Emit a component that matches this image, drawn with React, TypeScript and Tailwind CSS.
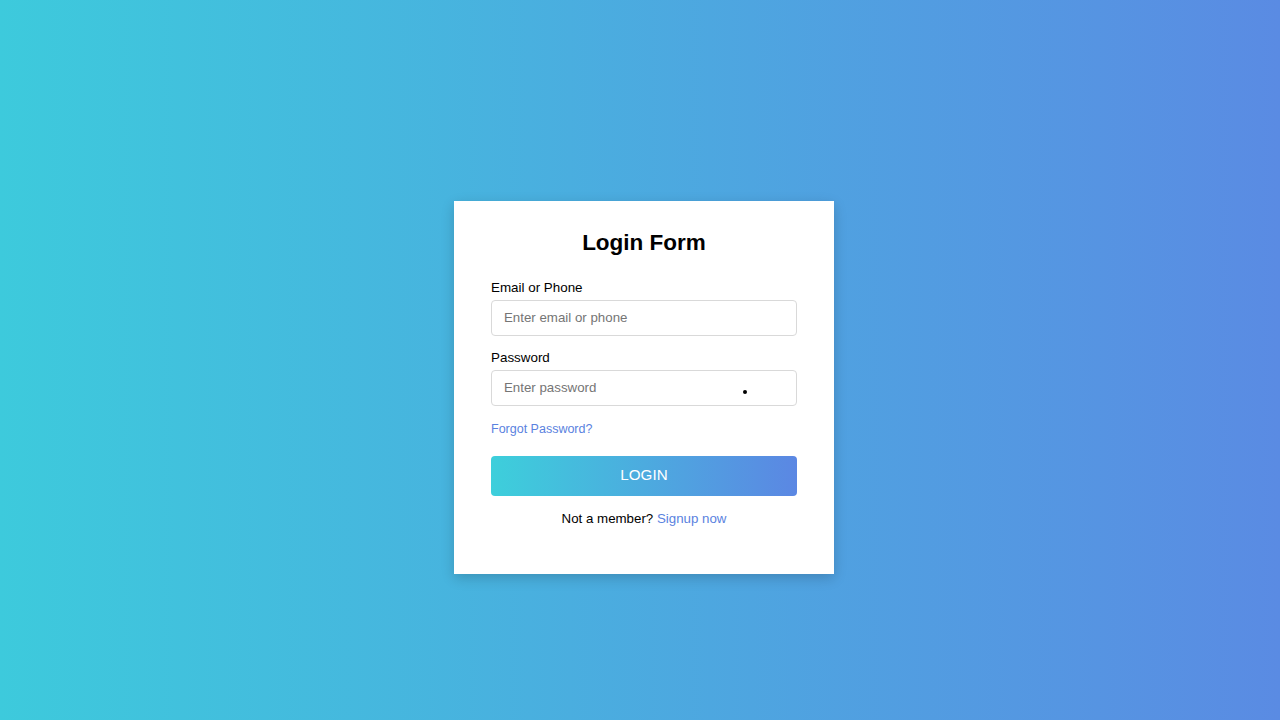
import React from "react";

export default function App() {
  return (
    <div
      className="w-full h-[720px] flex items-center justify-center pt-[54px] pl-[8px] bg-[linear-gradient(to_right,#3dcadc,#5a8be3)]"
      style={{ fontFamily: '"Liberation Sans", Arial, sans-serif' }}
    >
      <div className="w-[380px] h-[373px] bg-white shadow-[0_4px_12px_rgba(0,0,0,0.18)] px-[37px] pt-[28px] flex flex-col">
        <h1 className="text-[22.5px] leading-[28px] font-bold text-black text-center">Login Form</h1>
        <label className="mt-[22px] text-[13.4px] leading-[17px] text-black">Email or Phone</label>
        <input
          className="mt-[4px] h-[36px] w-full border border-[#d9d9d9] rounded-[4px] px-[12px] text-[13.3px] outline-none placeholder:text-[#757575]"
          placeholder="Enter email or phone"
        />
        <label className="mt-[13px] text-[13.4px] leading-[17px] text-black">Password</label>
        <div className="relative mt-[4px]">
          <input
            type="password"
            className="h-[36px] w-full border border-[#d9d9d9] rounded-[4px] px-[12px] text-[13.3px] outline-none placeholder:text-[#757575]"
            placeholder="Enter password"
          />
          <span className="absolute left-[252px] top-[20px] w-[4px] h-[4px] rounded-full bg-black" />
        </div>
        <a className="mt-[15px] text-[12.5px] leading-[16px] text-[#5a82e0] cursor-pointer">Forgot Password?</a>
        <button className="mt-[19px] h-[40px] w-full rounded-[4px] text-white text-[15.2px] bg-[linear-gradient(to_right,#3dcfdb,#5b87e3)]">
          LOGIN
        </button>
        <p className="mt-[14px] text-[13.3px] leading-[17px] text-center text-black">
          Not a member? <a className="text-[#5a82e0] cursor-pointer">Signup now</a>
        </p>
      </div>
    </div>
  );
}
